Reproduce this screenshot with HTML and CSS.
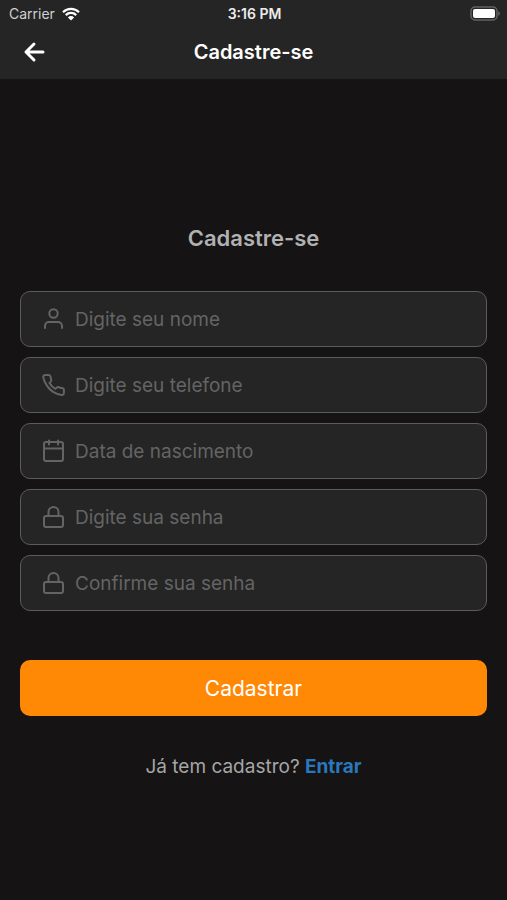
FILE: index.html
```html
<!DOCTYPE html>
<html lang="pt-BR">
<head>
  <meta charset="utf-8">
  <meta name="viewport" content="width=device-width, initial-scale=1">
  <title>Cadastre-se</title>
  <link rel="stylesheet" href="styles.css">
</head>
<body>
  <header class="top">
    <div class="status">
      <div class="status-side">
        <span class="carrier">Carrier</span>
        <svg class="wifi" viewBox="0 0 18 14" aria-hidden="true">
          <path d="M1 5.2a11.4 11.4 0 0 1 16 0M3.8 8.1a7.4 7.4 0 0 1 10.4 0" fill="none" stroke="currentColor" stroke-width="2.2"/>
          <path d="M9 13.6 5.9 10.4a4.4 4.4 0 0 1 6.2 0Z" fill="currentColor"/>
        </svg>
      </div>
      <span class="time">3:16 PM</span>
      <div class="status-side status-end">
        <svg class="battery" viewBox="0 0 31 15" aria-hidden="true">
          <rect x="2" y="1" width="26" height="13" rx="4" fill="none" stroke="#626262" stroke-width="1.5"/>
          <rect x="4" y="3" width="22" height="9" rx="2" fill="#fff"/>
          <path d="M29.3 5.3c1.2.5 1.5 1.3 1.5 2.2s-.3 1.7-1.5 2.2Z" fill="#6b6b6b"/>
        </svg>
      </div>
    </div>
    <nav class="navbar">
      <button class="back" type="button" aria-label="Voltar">
        <svg viewBox="0 0 24 24" aria-hidden="true"><path d="M21 12H4M12 4l-8 8 8 8"/></svg>
      </button>
      <h1 class="nav-title">Cadastre-se</h1>
    </nav>
  </header>

  <main class="content">
    <h2 class="title">Cadastre-se</h2>
    <form class="form">
      <div class="fields">
        <label class="field">
          <svg class="icon" viewBox="0 0 24 24" aria-hidden="true"><path d="M21 21v-2a4 4 0 0 0-4-4H8a4 4 0 0 0-4 4v2"/><circle cx="12.5" cy="6.5" r="4.2"/></svg>
          <input type="text" placeholder="Digite seu nome" aria-label="Digite seu nome">
        </label>
        <label class="field">
          <svg class="icon" viewBox="0 0 24 24" aria-hidden="true"><path d="M22.9 16.92v3a2 2 0 0 1-2.18 2 19.79 19.79 0 0 1-8.63-3.07 19.5 19.5 0 0 1-6-6 19.79 19.79 0 0 1-3.87-8.67A2 2 0 0 1 4.21 2h3.3a2 2 0 0 1 2 1.72 12.84 12.84 0 0 0 .7 2.81 2 2 0 0 1-.45 2.11L8.49 9.91a16 16 0 0 0 6 6l1.27-1.27a2 2 0 0 1 2.11-.45 12.84 12.84 0 0 0 2.81.7A2 2 0 0 1 22.9 16.92z"/></svg>
          <input type="tel" placeholder="Digite seu telefone" aria-label="Digite seu telefone">
        </label>
        <label class="field">
          <svg class="icon" viewBox="0 0 24 24" aria-hidden="true"><rect x="3" y="3" width="19" height="19" rx="2"/><path d="M17 1.5v4M8 1.5v4M3 9.5h19"/></svg>
          <input type="text" placeholder="Data de nascimento" aria-label="Data de nascimento">
        </label>
        <label class="field">
          <svg class="icon" viewBox="0 0 24 24" aria-hidden="true"><rect x="3" y="11" width="19" height="11" rx="2"/><path d="M7.5 11V7a5 5 0 0 1 10 0v4"/></svg>
          <input type="password" placeholder="Digite sua senha" aria-label="Digite sua senha">
        </label>
        <label class="field">
          <svg class="icon" viewBox="0 0 24 24" aria-hidden="true"><rect x="3" y="11" width="19" height="11" rx="2"/><path d="M7.5 11V7a5 5 0 0 1 10 0v4"/></svg>
          <input type="password" placeholder="Confirme sua senha" aria-label="Confirme sua senha">
        </label>
      </div>
      <button class="submit" type="submit">Cadastrar</button>
    </form>
    <p class="login">Já tem cadastro? <a href="#entrar">Entrar</a></p>
  </main>
</body>
</html>
```

FILE: styles.css
```css
* {
  box-sizing: border-box;
}

body {
  margin: 0;
  min-height: 100vh;
  background: #151314;
  color: #fff;
  font-family: Inter, "Liberation Sans", sans-serif;
}

h1,
h2,
p {
  margin: 0;
}

.top {
  background: #252525;
}

.status {
  display: grid;
  grid-template-columns: 1fr auto 1fr;
  align-items: center;
  height: 27px;
  padding: 0 7px 0 9px;
  font-size: 14px;
}

.status-side {
  display: flex;
  align-items: center;
  gap: 7px;
}

.status-end {
  justify-content: flex-end;
}

.carrier {
  color: #d0d0d0;
}

.time {
  font-weight: 600;
  color: #ececec;
}

.wifi {
  width: 18px;
  height: 14px;
}

.battery {
  width: 31px;
  height: 15px;
}

.navbar {
  display: grid;
  grid-template-columns: 1fr auto 1fr;
  align-items: center;
  height: 52px;
  padding: 0 22px 2px;
}

.back {
  display: flex;
  justify-self: start;
  padding: 0;
  border: 0;
  background: none;
  color: inherit;
}

.back svg {
  width: 24px;
  height: 24px;
  fill: none;
  stroke: currentColor;
  stroke-width: 3;
  stroke-linecap: round;
  stroke-linejoin: round;
}

.nav-title {
  font-size: 20px;
  line-height: 24px;
  font-weight: 600;
}

.content {
  padding: 143px 20px 40px;
}

.title {
  color: #b1b1b1;
  font-size: 22px;
  line-height: 32px;
  font-weight: 600;
  text-align: center;
}

.form {
  display: flex;
  flex-direction: column;
  gap: 49px;
  margin-top: 37px;
}

.fields {
  display: flex;
  flex-direction: column;
  gap: 10px;
}

.field {
  display: flex;
  align-items: center;
  gap: 10px;
  height: 56px;
  padding: 0 20px;
  border: 1px solid #5c5c5c;
  border-radius: 10px;
  background: #252525;
}

.icon {
  flex: none;
  width: 24px;
  height: 24px;
  fill: none;
  stroke: #646464;
  stroke-width: 2;
  stroke-linecap: round;
  stroke-linejoin: round;
}

.field input {
  flex: 1;
  min-width: 0;
  padding: 2px 0 0;
  border: 0;
  outline: 0;
  background: none;
  color: #fff;
  font: inherit;
  font-size: 19px;
  line-height: 24px;
}

.field input::placeholder {
  color: #646464;
  opacity: 1;
}

.submit {
  height: 56px;
  border: 0;
  border-radius: 10px;
  background: #ff8805;
  color: #fff;
  font: inherit;
  font-size: 21px;
}

.login {
  margin-top: 39px;
  color: #a6a6a6;
  font-size: 19px;
  line-height: 24px;
  text-align: center;
}

.login a {
  color: #2978bd;
  font-weight: 700;
  text-decoration: none;
}
```
